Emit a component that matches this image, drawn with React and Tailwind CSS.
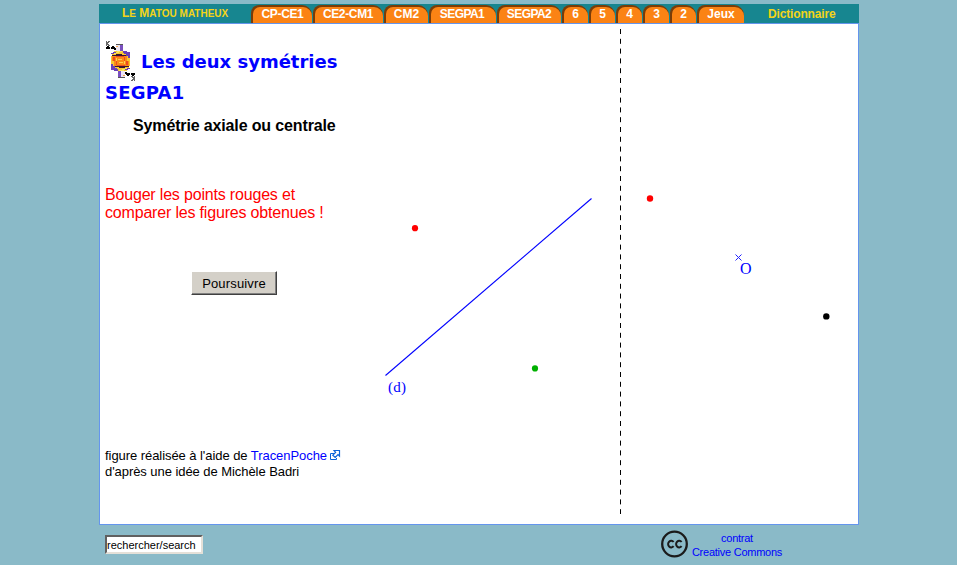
import React from "react";

const ARIAL = "font-['Liberation_Sans',Arial,sans-serif]";

const tabs = [
  { label: "CP-CE1", w: "w-[61px]", t: "tracking-[-0.35px]" },
  { label: "CE2-CM1", w: "w-[70px]", t: "tracking-[-0.35px] pr-[2px]" },
  { label: "CM2", w: "w-[44px]", t: "pr-px" },
  { label: "SEGPA1", w: "w-[67px]", t: "tracking-[-0.55px] pr-[3px]" },
  { label: "SEGPA2", w: "w-[64px]", t: "tracking-[-0.55px] pr-[2px]" },
  { label: "6", w: "w-[26px]", t: "pr-px" },
  { label: "5", w: "w-[26px]", t: "pr-px" },
  { label: "4", w: "w-[26px]", t: "pr-px" },
  { label: "3", w: "w-[26px]", t: "pr-px" },
  { label: "2", w: "w-[26px]", t: "pr-px" },
  { label: "Jeux", w: "w-[47px]", t: "pr-px" },
];

function Tab({ label, w, t }) {
  return (
    <a className={`${w} flex h-[18px] shrink-0 rounded-tl-[8px] rounded-tr-[10px] bg-[#7a3c08] pt-[2px] pl-[2px]`}>
      <span
        className={`${t} flex h-4 grow items-center justify-center rounded-tl-[7px] rounded-tr-[9px] bg-[#fb8314] pb-[3px] text-[12px] leading-none font-bold text-white`}
      >
        {label}
      </span>
    </a>
  );
}

// Playing-card king, top half; the bottom half is the same drawing turned by 180 degrees.
function HalfKing() {
  return (
    <g>
      <path fill="#666" d="M1 0h1v1h1v-1h2v1h-1v1h-1v1h1v1h1v1h-2v-1h-1v1h-1z" />
      <path fill="#000" d="M2 5h2v1h1v2h-4v-2h1zM7 5h2v1h1v2h-4v-2h1zM10 7h1v2h-2v-1h1z" />
      <path fill="#555" d="M11 3h7v1h-7z" />
      <path fill="#ece5f4" d="M11 4h4v6h-4z" />
      <path fill="#f8a848" d="M11 5h2v1h-2z" />
      <path fill="#7a50c0" d="M15 4h3v6h-3z" />
      <path fill="#f8c832" d="M9 10h12v1h3v3h1v6h-19v-5h1v-3h2z" />
      <path fill="#fbe860" d="M12 10h5v1h-3v1h-3v1h-2v-1h2v-1h1z" />
      <path fill="#6a3fb8" d="M8 11h3v1h-2v1h-3v-1h2zM18 10h4v1h3v6h-2v-2h-2v-2h-2v-1h-1z" />
      <path fill="#3a1430" d="M7 14h4v-1h6v1h4v1h-14z" />
      <path fill="#fb8a17" d="M7 15h15v5h-15z" />
      <path fill="#ea4c20" d="M8 16h2v4h-2zM11 15h8v1h-8zM19 16h1v4h-1z" />
      <path fill="#fdd050" d="M11 17h1v3h-1zM13 18h4v1h-4z" />
    </g>
  );
}

function KingIcon() {
  return (
    <svg width="30" height="40" viewBox="0 0 30 40" shapeRendering="crispEdges">
      <HalfKing />
      <g transform="rotate(180 15.500 20)">
        <HalfKing />
      </g>
    </svg>
  );
}

function ExternalIcon() {
  return (
    <svg className="ml-[3px] inline-block align-[-1px]" width="11" height="11" viewBox="0 0 11 11">
      <path d="M4 3.500H.5v6h6V8" fill="#fff" stroke="#0b63d8" />
      <path d="M4 .5h5.500V6L8 4.600 5.200 7.500 2.800 5.200l2.800-2.800z" fill="#fff" stroke="#0b63d8" strokeWidth="1.200" />
    </svg>
  );
}

function Figure() {
  return (
    <svg className="shrink-0" width="488" height="500" viewBox="370 24 488 500">
      <line x1="620.5" y1="29" x2="620.5" y2="514" stroke="#000" strokeDasharray="5 4.800" />
      <line x1="385.500" y1="375.500" x2="591.500" y2="198.500" stroke="#00f" strokeWidth="1.100" />
      <circle cx="415" cy="228.200" r="3.100" fill="#f00" />
      <circle cx="650" cy="198.500" r="3.200" fill="#f00" />
      <circle cx="535" cy="368.400" r="3.100" fill="#00b000" />
      <circle cx="826.300" cy="316.400" r="3.200" fill="#000" />
      <path d="M735.500 254.500l6 6M741.500 254.500l-6 6" stroke="#22f" strokeWidth="1" />
      <g fill="#00f" fontFamily="'Liberation Serif', serif" fontSize="15">
        <text x="388" y="392" textLength="18">(d)</text>
        <text x="740" y="274" fontSize="16">O</text>
      </g>
    </svg>
  );
}

function CreativeCommons() {
  return (
    <svg width="28" height="28" viewBox="0 0 28 28">
      <circle cx="13.500" cy="14" r="12.300" fill="none" stroke="#1b1b1b" strokeWidth="2.300" />
      <path
        d="M12.600 12a3.100 3.300 0 1 0 0 4.200M20.600 12a3.100 3.300 0 1 0 0 4.200"
        fill="none"
        stroke="#1b1b1b"
        strokeWidth="2"
      />
    </svg>
  );
}

export default function App() {
  return (
    <div className={`${ARIAL} h-[565px] w-[957px] overflow-hidden bg-[#8abac8] pt-1 pl-[99px]`}>
      <header className="flex h-[19px] w-[760px] items-end bg-[#178690] font-bold text-[#f4d418]">
        <div className="w-[152px] pb-[2px] pl-[23px] text-[12px] leading-[14px] whitespace-nowrap">
          L<span className="text-[10px]">E</span> M<span className="text-[10px]">ATOU MATHEUX</span>
        </div>
        <nav className="flex gap-px">
          {tabs.map((t) => (
            <Tab key={t.label} {...t} />
          ))}
        </nav>
        <div className="pb-[2px] pl-6 text-[12px] leading-[14px] tracking-[-0.15px]">Dictionnaire</div>
      </header>

      <main className="flex h-[502px] w-[760px] border border-[#6495ed] bg-white">
        <section className="w-[270px] shrink-0 pt-4 pl-[5px]">
          <div className="font-['DejaVu_Sans',Verdana,sans-serif] text-[18px] font-bold text-[#00f]">
            <div className="flex h-[41px] items-center gap-[6px] whitespace-nowrap">
              <KingIcon />
              <h1 className="pt-[2px]">Les deux symétries</h1>
            </div>
            <div className="h-[22px] pt-px leading-[22px] tracking-[0.25px]">SEGPA1</div>
          </div>
          <h2 className="mt-[14px] pl-7 text-[16px] leading-[18px] font-bold tracking-[-0.14px] whitespace-nowrap">
            Symétrie axiale ou centrale
          </h2>
          <p className="mt-[51px] text-[16px] leading-[18px] tracking-[-0.18px] whitespace-nowrap text-[#f00]">
            Bouger les points rouges et
            <br />
            comparer les figures obtenues !
          </p>
          <button className="mt-[49px] ml-[86px] flex h-6 w-[86px] items-center justify-center border border-t-white border-r-[#404040] border-b-[#404040] border-l-white bg-[#d4d0c8] pt-px text-[13px] tracking-[0.15px] shadow-[inset_-1px_-1px_0_#808080]">
            Poursuivre
          </button>
          <p className="mt-[153px] text-[13px] leading-4 tracking-[-0.06px] whitespace-nowrap">
            figure réalisée à l'aide de <a className="text-[#00f]">TracenPoche</a>
            <ExternalIcon />
            <br />
            d'après une idée de Michèle Badri
          </p>
        </section>
        <Figure />
      </main>

      <footer className="flex w-[760px] pl-[6px]">
        <input
          className="mt-[10px] h-[19px] w-[98px] border-2 border-t-[#606060] border-r-[#e4e0d8] border-b-[#e4e0d8] border-l-[#606060] bg-white text-[11px] text-black"
          defaultValue="rechercher/search"
        />
        <div className="mt-[5px] ml-[458px]">
          <CreativeCommons />
        </div>
        <a className="mt-[6px] ml-[2px] w-[92px] text-center text-[11px] leading-[14px] tracking-[-0.25px] whitespace-nowrap text-[#00f]">
          contrat
          <br />
          Creative Commons
        </a>
      </footer>
    </div>
  );
}
